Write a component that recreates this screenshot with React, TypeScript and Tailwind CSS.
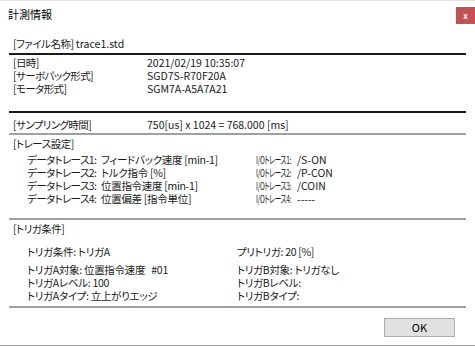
import React from 'react';

const font = { fontFamily: '"Noto Sans CJK JP", "Noto Sans", sans-serif' };

const Line: React.FC<{ dark?: boolean }> = ({ dark }) => (
  <div className={`mx-[9px] h-[2px] ${dark ? 'bg-[#1a1a1a]' : 'bg-[#a0a0a0]'}`} />
);

const traces = [
  { label: 'データトレース1:', value: 'フィードバック速度 [min-1]', io: 'I/Oトレース1:', ioValue: '/S-ON' },
  { label: 'データトレース2:', value: 'トルク指令 [%]', io: 'I/Oトレース2:', ioValue: '/P-CON' },
  { label: 'データトレース3:', value: '位置指令速度 [min-1]', io: 'I/Oトレース3:', ioValue: '/COIN' },
  { label: 'データトレース4:', value: '位置偏差 [指令単位]', io: 'I/Oトレース4:', ioValue: '-----' },
];

const triggers = [
  { a: 'トリガA対象: 位置指令速度\u00a0\u00a0\u00a0#01', b: 'トリガB対象: トリガなし' },
  { a: 'トリガAレベル: 100', b: 'トリガBレベル:' },
  { a: 'トリガAタイプ: 立上がりエッジ', b: 'トリガBタイプ:' },
];

export default function App() {
  return (
    <div
      className="w-[475px] h-[346px] bg-white text-[10.5px] leading-[13px] text-[#1a1a1a] flex flex-col overflow-hidden whitespace-nowrap [font-feature-settings:'palt']"
      style={font}
    >
      {/* title bar */}
      <div className="h-[28px] border-t border-[#e3e3e3] flex items-start justify-between">
        <span className="ml-[8px] mt-[6px] text-[11px] leading-[14px] text-black [font-feature-settings:normal]">計測情報</span>
        <div className="mt-[6px] w-[19px] h-[17px] bg-[#c75050] flex items-center justify-center text-white text-[8px] font-bold leading-none">
          x
        </div>
      </div>

      {/* file name */}
      <div className="h-[25px] pt-[9px] px-[13px]">
        <span className="tracking-[-0.5px]">[ファイル名称]</span> trace1.std
      </div>
      <Line dark />

      {/* date / servo / motor */}
      <div className="h-[56px] pt-[1px] px-[13px]">
        {[
          ['[日時]', '2021/02/19 10:35:07'],
          ['[サーボパック形式]', 'SGD7S-R70F20A'],
          ['[モータ形式]', 'SGM7A-A5A7A21'],
        ].map(([k, v]) => (
          <div key={k} className="flex">
            <span className="w-[134px] tracking-[-0.6px]">{k}</span>
            <span>{v}</span>
          </div>
        ))}
      </div>
      <Line dark />

      {/* sampling */}
      <div className="h-[20px] pt-[5px] px-[13px] flex">
        <span className="w-[134px] tracking-[-0.6px]">[サンプリング時間]</span>
        <span>750[us] x 1024 = 768.000 [ms]</span>
      </div>
      <Line />

      {/* trace settings */}
      <div className="h-[83px] pt-[2px] px-[13px]">
        <div className="tracking-[-0.5px]">[トレース設定]</div>
        <div className="mt-[3px] pl-[14px]">
          {traces.map((t) => (
            <div key={t.label} className="flex">
              <span className="w-[74px] tracking-[-0.6px]">{t.label}</span>
              <span className="w-[155px] tracking-[-0.3px]">{t.value}</span>
              <span className="w-[41px]">
                <span className="inline-block origin-left scale-x-[0.62] tracking-[-0.4px]">{t.io}</span>
              </span>
              <span>{t.ioValue}</span>
            </div>
          ))}
        </div>
      </div>
      <Line />

      {/* trigger */}
      <div className="h-[86px] pt-[2px] px-[13px]">
        <div className="tracking-[-0.5px]">[トリガ条件]</div>
        <div className="mt-[10px] pl-[14px] flex tracking-[-0.3px]">
          <span className="w-[210px]">トリガ条件: トリガA</span>
          <span>プリトリガ: 20 [%]</span>
        </div>
        <div className="mt-[5px] pl-[14px] tracking-[-0.3px]">
          {triggers.map((t) => (
            <div key={t.b} className="flex">
              <span className="w-[210px]">{t.a}</span>
              <span>{t.b}</span>
            </div>
          ))}
        </div>
      </div>
      <Line />

      {/* footer */}
      <div className="flex-1 flex flex-col">
        <div className="flex justify-end pr-[20px] pt-[10px]">
          <button className="w-[71px] h-[19px] border border-[#adadad] bg-[#e1e1e1] text-[11px] leading-[17px] text-black">
            OK
          </button>
        </div>
        <div className="mt-auto h-[1px] bg-[#a0a0a0]" />
      </div>
    </div>
  );
}
